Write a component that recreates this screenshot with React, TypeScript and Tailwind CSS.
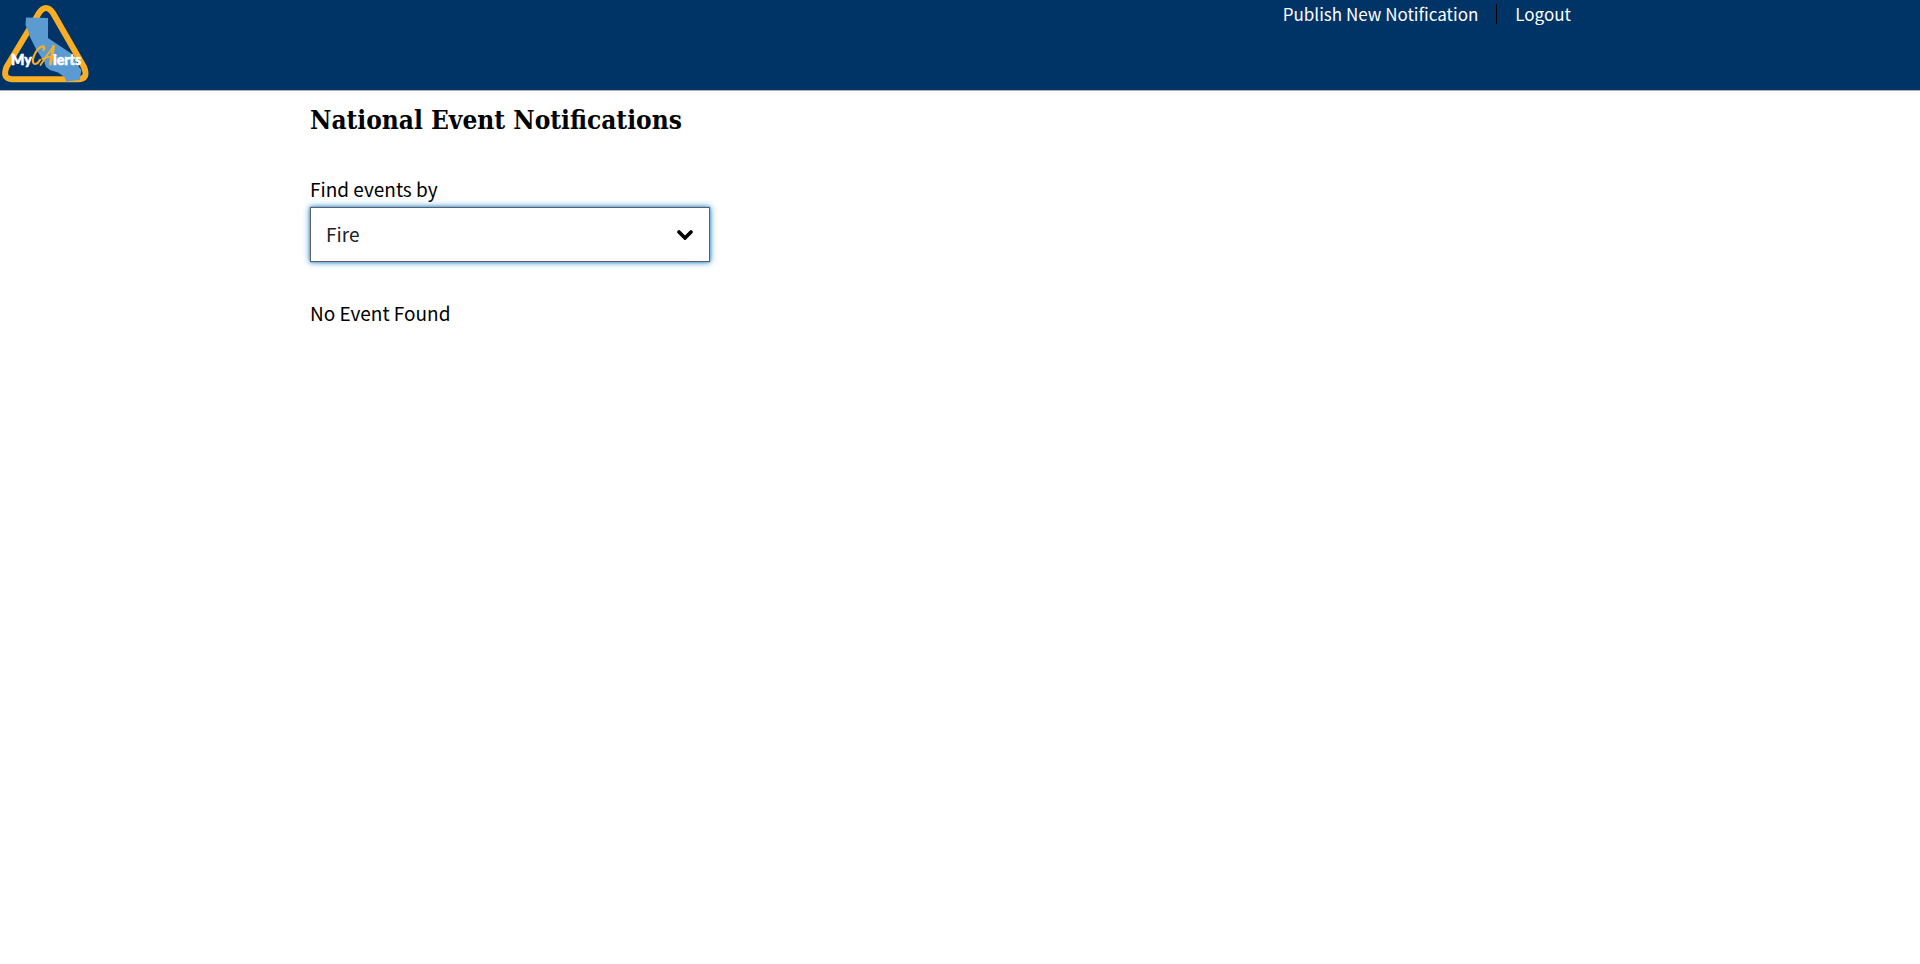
import { useState } from "react";

function Logo() {
  return (
    <svg viewBox="0 0 90 90" className="size-[90px]" role="img" aria-label="MyCAlerts">
      <path
        d="M39 13 Q46 3 53 13 L84 67 Q89 79.200 78 79.200 L12 79.200 Q2 79 6.500 67 Z"
        fill="none"
        stroke="#fbae24"
        strokeWidth="6"
        strokeLinejoin="round"
      />
      <path
        d="M26 17.500 L48 18 L48 38 L72 54 L76 60 L79 67 L81.500 70 L80.500 75 L80 80 L66 81.500 L64.500 77 L58 72.500 L50 70 L46 67 L44 61 L37 51 L34 45 L30 37 L28 31 L25.500 25 Z"
        fill="#5b9bd1"
      />
      <text x="11" y="65" fontSize="14" fontWeight="800" fill="#fff" stroke="#fff" strokeWidth="0.400" fontFamily="Lato, sans-serif">
        My
      </text>
      <g fill="none" stroke="#fbae24" strokeLinecap="round" strokeLinejoin="round">
        <path d="M43.500 50 Q45.500 46 42 46.500 Q37 48 33.500 57 Q31.500 64 35.500 64 Q38 63.500 40 60" strokeWidth="2.200" />
        <path d="M40.500 65 Q46 56 53.500 46.500" strokeWidth="1.800" />
        <path d="M53.500 46.500 L50.500 64" strokeWidth="3" />
        <path d="M42 59 Q47 56.500 52 57" strokeWidth="1.600" />
      </g>
      <text x="53" y="65" fontSize="14" fontWeight="800" fill="#fff" stroke="#fff" strokeWidth="0.400" fontFamily="Lato, sans-serif">
        ierts
      </text>
    </svg>
  );
}

export default function App() {
  const [kind, setKind] = useState("Fire");
  return (
    <div className="bg-white font-['Noto_Sans_CJK_SC',sans-serif] text-black">
      <header className="grid items-start border-b border-[#aeb0b5] bg-[#003366]">
        <div className="col-start-1 row-start-1">
          <Logo />
        </div>
        <nav className="col-start-1 row-start-1 mx-auto flex w-full max-w-[1300px] items-center justify-end pt-1 pr-[39px] text-[17px] leading-5 text-white">
          <a href="#publish" className="border-r border-black pr-[18px]">Publish New Notification</a>
          <a href="#logout" className="pl-[18px]">Logout</a>
        </nav>
      </header>
      <main className="mx-auto max-w-[1300px] pt-[11px]">
        <h1 className="font-['DejaVu_Serif_Condensed','DejaVu_Serif',serif] text-[26px] leading-9 font-bold">
          National Event Notifications
        </h1>
        <label htmlFor="event-kind" className="mt-[37px] block text-[19px] leading-7">Find events by</label>
        <div className="relative mt-1 w-[400px] max-w-full">
          <select
            id="event-kind"
            value={kind}
            onChange={(e) => setKind(e.target.value)}
            className="block h-[55px] w-full appearance-none border border-[#5b616b] bg-white px-[15px] text-[19px] text-[#212121] shadow-[0_0_3px_#3e94cf,0_0_7px_#3e94cf] outline-none"
          >
            <option>Fire</option>
            <option>Flood</option>
            <option>Earthquake</option>
          </select>
          <svg viewBox="0 0 16 10" className="pointer-events-none absolute top-[23px] right-[17px] h-[10px] w-4" aria-hidden="true">
            <path d="M2 2 L8 8 L14 2" fill="none" stroke="#000" strokeWidth="3.600" strokeLinecap="round" />
          </svg>
        </div>
        <p className="mt-[37px] text-[19px] leading-7">No Event Found</p>
      </main>
    </div>
  );
}
